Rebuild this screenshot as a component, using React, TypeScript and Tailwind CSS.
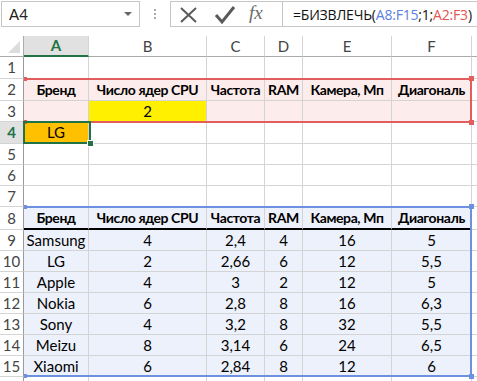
import React from 'react';

const FONT = { fontFamily: 'Lato, "Open Sans", "Liberation Sans", sans-serif' };

const COLS = ['A', 'B', 'C', 'D', 'E', 'F'];
const ROW_H = [22, 22, 21, 22, 21, 21, 21, 23, 21, 21, 21, 21, 21, 21, 21, 8];

const HEAD = ['Бренд', 'Число ядер CPU', 'Частота', 'RAM', 'Камера, Мп', 'Диагональ'];
const DATA = [
  ['Samsung', '4', '2,4', '4', '16', '5'],
  ['LG', '2', '2,66', '6', '12', '5,5'],
  ['Apple', '4', '3', '2', '12', '5'],
  ['Nokia', '6', '2,8', '8', '16', '6,3'],
  ['Sony', '4', '3,2', '8', '32', '5,5'],
  ['Meizu', '8', '3,14', '6', '24', '6,5'],
  ['Xiaomi', '6', '2,84', '8', '12', '6'],
];

// what sits in each cell: text, bold, fill
function cellFor(row: number, col: number): { text: string; bold?: boolean; bg?: string } {
  if (row === 2) return { text: HEAD[col], bold: true, bg: 'bg-[#fcecec]' };
  if (row === 3) return col === 1 ? { text: '2', bg: 'bg-[#fff000]' } : { text: '', bg: 'bg-[#fcecec]' };
  if (row === 4 && col === 0) return { text: 'LG', bg: 'bg-[#ffc000]' };
  if (row === 8) return { text: HEAD[col], bold: true, bg: 'bg-[#edf1fb]' };
  if (row >= 9 && row <= 15) return { text: DATA[row - 9][col], bg: 'bg-[#edf1fb]' };
  return { text: '' };
}

const FormulaBar: React.FC = () => (
  <div className="flex h-[36px] bg-white">
    <div className="ml-[1px] mt-[1px] flex h-[26px] w-[139px] items-center justify-between border border-[#c6c6c6] pl-[7px] pr-[7px] text-[15px] text-[#222]">
      <span>A4</span>
      <div className="h-0 w-0 border-x-[4px] border-t-[4px] border-x-transparent border-t-[#666]" />
    </div>
    <div className="flex w-[30px] flex-col items-center justify-center gap-[2px] pb-[8px]">
      <div className="h-[2px] w-[2px] bg-[#aaa]" />
      <div className="h-[2px] w-[2px] bg-[#aaa]" />
      <div className="h-[2px] w-[2px] bg-[#aaa]" />
    </div>
    <div className="mt-[1px] flex h-[26px] flex-1 border border-r-0 border-[#c6c6c6]">
      <div className="flex w-[112px] items-center border-r border-[#c6c6c6]">
        <svg width="78" height="24" viewBox="0 0 78 24">
          <path d="M10 6 L25 20 M25 6 L10 20" stroke="#5a5a5a" strokeWidth="2" fill="none" />
          <path d="M45 13 L51 20 L63 5" stroke="#5a5a5a" strokeWidth="3" fill="none" />
        </svg>
        <span className="-mt-[2px] text-[19px] italic text-[#6a6a6a]" style={{ fontFamily: '"Liberation Serif", serif' }}>
          fx
        </span>
      </div>
      <div className="flex items-center pl-[10px] text-[14px] text-[#111]" style={{ fontFamily: '"Open Sans", "Liberation Sans", sans-serif' }}>
        <span className="tracking-[-0.2px]">
          =БИЗВЛЕЧЬ(<span className="text-[#5b80e3]">A8:F15</span>;1;<span className="text-[#e25454]">A2:F3</span>)
        </span>
      </div>
    </div>
  </div>
);

// coloured range outline with corner handles (the left edge hides behind the row header)
const RangeFrame: React.FC<{ top: number; height: number; color: string }> = ({ top, height, color }) => (
  <div className="absolute left-[24px] w-[448px] border-y-2 border-r-2" style={{ top, height, borderColor: color }}>
    <div className="absolute -right-[4px] -top-[4px] h-[5px] w-[5px]" style={{ background: color }} />
    <div className="absolute -bottom-[4px] -right-[4px] h-[5px] w-[5px]" style={{ background: color }} />
    <div className="absolute -top-[3px] left-0 h-[4px] w-[3px]" style={{ background: color }} />
    <div className="absolute -bottom-[3px] left-0 h-[4px] w-[3px]" style={{ background: color }} />
  </div>
);

const App: React.FC = () => {
  return (
    <div className="relative h-[381px] w-[477px] overflow-hidden bg-white" style={FONT}>
      <FormulaBar />

      <div className="grid grid-cols-[24px_65px_118px_58px_38px_89px_80px_1fr]">
        {/* column headers */}
        <div className="flex h-[21px] items-end justify-end border-b border-r border-[#ababab] bg-white p-[3px]">
          <div className="h-0 w-0 border-b-[12px] border-l-[12px] border-b-[#dcdcdc] border-l-transparent" />
        </div>
        {COLS.map((c) => (
          <div
            key={c}
            className={
              c === 'A'
                ? 'flex h-[21px] items-center justify-center border-b-2 border-r border-b-[#217346] border-r-[#d4d4d4] bg-[#e1e1e1] text-[15px] font-bold text-[#217346]'
                : 'flex h-[21px] items-center justify-center border-b border-r border-b-[#ababab] border-r-[#d4d4d4] bg-white text-[15px] text-[#444]'
            }
          >
            {c}
          </div>
        ))}
        <div className="h-[21px] border-b border-[#ababab] bg-white" />

        {/* rows */}
        {ROW_H.map((h, i) => {
          const row = i + 1;
          return (
            <React.Fragment key={row}>
              <div
                style={{ height: h }}
                className={
                  row === 4
                    ? 'flex items-center justify-center border-b border-r border-b-[#d4d4d4] border-r-[#9b9b9b] bg-[#e1e1e1] text-[15px] font-bold text-[#217346]'
                    : 'flex items-center justify-center border-b border-r border-b-[#d4d4d4] border-r-[#9b9b9b] bg-white text-[15px] text-[#444]'
                }
              >
                {row <= 15 ? row : ''}
              </div>
              {COLS.map((_, ci) => {
                const cell = cellFor(row, ci);
                return (
                  <div
                    key={ci}
                    style={{ height: h }}
                    className={`flex items-center justify-center whitespace-nowrap border-r border-[#d4d4d4] text-black ${
                      row === 8 ? 'border-b-2 border-b-black' : 'border-b'
                    } ${cell.bold ? 'text-[14px] font-bold tracking-[-0.4px]' : 'text-[15px]'} ${cell.bg ?? 'bg-white'}`}
                  >
                    {cell.text}
                  </div>
                );
              })}
              <div style={{ height: h }} className="border-b border-[#d4d4d4] bg-white" />
            </React.Fragment>
          );
        })}
      </div>

      <RangeFrame top={78} height={45} color="#e35d5d" />
      <RangeFrame top={206} height={171} color="#6d90e0" />

      {/* active cell A4 with fill handle */}
      <div className="absolute left-[23px] top-[121px] h-[23px] w-[68px] border-2 border-[#217346]">
        <div className="absolute -bottom-[5px] -right-[5px] h-[7px] w-[7px] border border-white bg-[#217346]" />
      </div>
    </div>
  );
};

export default App;
